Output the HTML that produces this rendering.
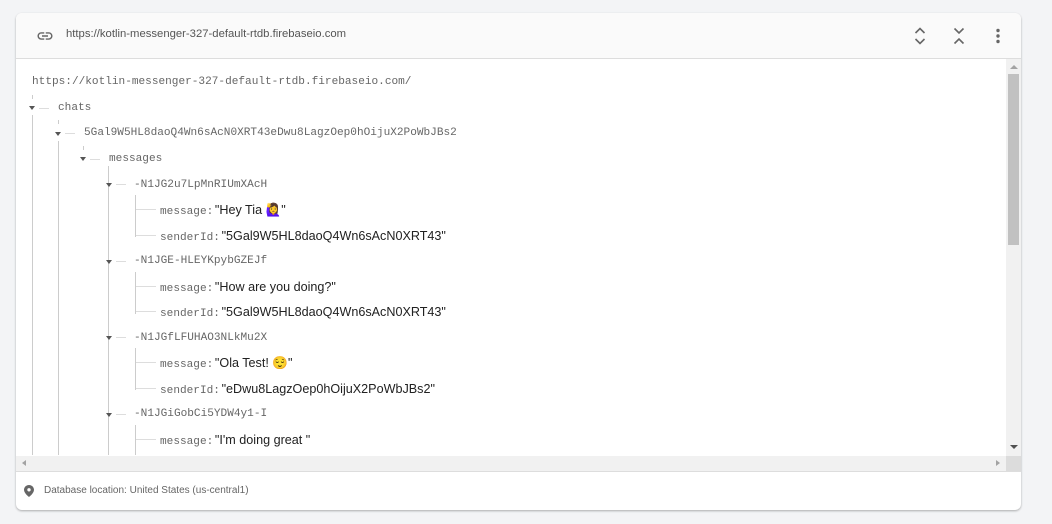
<!DOCTYPE html>
<html><head><style>
body{margin:0;width:1052px;height:524px;background:#f3f4f6;position:relative;overflow:hidden;font-family:"Liberation Sans",sans-serif}
.card{position:absolute;left:16px;top:13px;width:1005px;height:497px;background:#fff;border-radius:6px;box-shadow:0 1px 2px rgba(0,0,0,.3);overflow:hidden}
.hdr{position:absolute;left:0;top:0;width:1005px;height:45px;background:#fafafa;border-bottom:1px solid #ddd}
.m{position:absolute;font-family:"Liberation Mono",monospace;font-size:11.1px;color:#666;white-space:nowrap;line-height:14px;margin-top:1px}
.v{font-family:"Liberation Sans","Noto Sans CJK JP",sans-serif;font-size:12.6px;color:#212121;margin-left:-5px}
.ar{position:absolute;width:0;height:0;border-left:3.5px solid transparent;border-right:3.5px solid transparent;border-top:4px solid #555}
.vl{position:absolute;width:1px;background:#ccc}
.hl{position:absolute;height:1px;background:#ddd}
</style></head><body>
<div class="card">
 <div class="hdr">
  <svg style="position:absolute;left:20px;top:14px" width="18" height="18" viewBox="0 0 24 24"><path fill="#666" d="M3.9 12c0-1.71 1.39-3.1 3.1-3.1h4V7H7c-2.76 0-5 2.24-5 5s2.24 5 5 5h4v-1.9H7c-1.71 0-3.1-1.39-3.1-3.1zM8 13h8v-2H8v2zm9-6h-4v1.9h4c1.71 0 3.1 1.39 3.1 3.1s-1.39 3.1-3.1 3.1h-4V17h4c2.76 0 5-2.24 5-5s-2.24-5-5-5z"/></svg>
  <div style="position:absolute;left:50px;top:15px;font-size:11.3px;color:#555">https://kotlin-messenger-327-default-rtdb.firebaseio.com</div>
  <svg style="position:absolute;left:898px;top:13px" width="12" height="20" viewBox="0 0 12 20"><path d="M1.5 7l4.5-4.5 4.5 4.5M1.5 13l4.5 4.5 4.5-4.5" stroke="#666" stroke-width="1.6" fill="none"/></svg>
  <svg style="position:absolute;left:937px;top:13px" width="12" height="20" viewBox="0 0 12 20"><path d="M1.5 2.5l4.5 4.5 4.5-4.5M1.5 17.5l4.5-4.5 4.5 4.5" stroke="#666" stroke-width="1.6" fill="none"/></svg>
  <svg style="position:absolute;left:979px;top:15px" width="6" height="16" viewBox="0 0 6 16"><circle cx="3" cy="2.5" r="1.7" fill="#666"/><circle cx="3" cy="8" r="1.7" fill="#666"/><circle cx="3" cy="13.5" r="1.7" fill="#666"/></svg>
 </div>
 <div style="position:absolute;left:990px;top:46px;width:15px;height:397px;background:#f1f1f1"></div>
 <div style="position:absolute;left:992px;top:61px;width:11px;height:171px;background:#c1c1c1"></div>
 <div style="position:absolute;left:994px;top:52px;width:0;height:0;border-left:4px solid transparent;border-right:4px solid transparent;border-bottom:4px solid #a3a3a3"></div>
 <div style="position:absolute;left:994px;top:432px;width:0;height:0;border-left:4px solid transparent;border-right:4px solid transparent;border-top:4px solid #505050"></div>
 <div style="position:absolute;left:0;top:443px;width:990px;height:15px;background:#f1f1f1"></div>
 <div style="position:absolute;left:990px;top:443px;width:15px;height:15px;background:#dcdcdc"></div>
 <div style="position:absolute;left:6px;top:447px;border-top:3.5px solid transparent;border-bottom:3.5px solid transparent;border-right:4px solid #a3a3a3"></div>
 <div style="position:absolute;left:980px;top:447px;border-top:3.5px solid transparent;border-bottom:3.5px solid transparent;border-left:4px solid #a3a3a3"></div>
 <div style="position:absolute;left:0;top:458px;width:1005px;height:1px;background:#ddd"></div>
 <svg style="position:absolute;left:8px;top:472px" width="10" height="12" viewBox="0 0 10 12"><path d="M5 0C2.2 0 0 2.2 0 4.8 0 8.4 5 12 5 12s5-3.6 5-7.2C10 2.2 7.8 0 5 0zm0 6.5a1.7 1.7 0 110-3.4 1.7 1.7 0 010 3.4z" fill="#666"/></svg>
 <div style="position:absolute;left:28px;top:472px;font-size:10px;color:#666">Database location: United States (us-central1)</div>
</div>
<div style="position:absolute;left:16px;top:59px;width:990px;height:396px;overflow:hidden">
<div style="position:relative;left:-16px;top:-59px;width:1052px;height:524px">
 <div class="m" style="left:32px;top:74px">https://kotlin-messenger-327-default-rtdb.firebaseio.com/</div>
 <div class="vl" style="left:32px;top:95px;height:4px"></div>
 <div class="ar" style="left:29px;top:106px"></div><div class="hl" style="left:39px;top:108px;width:10px"></div>
 <div class="m" style="left:58px;top:100px">chats</div>
 <div class="vl" style="left:32px;top:115px;height:350px"></div>
 <div class="vl" style="left:58px;top:120px;height:4px"></div>
 <div class="ar" style="left:55px;top:132px"></div><div class="hl" style="left:65px;top:133px;width:10px"></div>
 <div class="m" style="left:84px;top:125px">5Gal9W5HL8daoQ4Wn6sAcN0XRT43eDwu8LagzOep0hOijuX2PoWbJBs2</div>
 <div class="vl" style="left:58px;top:141px;height:330px"></div>
 <div class="vl" style="left:83px;top:146px;height:4px"></div>
 <div class="ar" style="left:80px;top:157px"></div><div class="hl" style="left:90px;top:159px;width:10px"></div>
 <div class="m" style="left:109px;top:151px">messages</div>
 <div class="vl" style="left:108px;top:166px;height:300px"></div>

 <div class="ar" style="left:106px;top:183px"></div><div class="hl" style="left:116px;top:184px;width:10px"></div>
 <div class="m" style="left:134px;top:177px">-N1JG2u7LpMnRIUmXAcH</div>
 <div class="vl" style="left:135px;top:195px;height:42px"></div>
 <div class="hl" style="left:136px;top:209px;width:20px"></div><div class="m" style="left:160px;top:202px">message: <span class="v">"Hey Tia 🙋‍♀️"</span></div>
 <div class="hl" style="left:136px;top:235px;width:20px"></div><div class="m" style="left:160px;top:228px">senderId: <span class="v">"5Gal9W5HL8daoQ4Wn6sAcN0XRT43"</span></div>

 <div class="ar" style="left:106px;top:260px"></div><div class="hl" style="left:116px;top:261px;width:10px"></div>
 <div class="m" style="left:134px;top:253px">-N1JGE-HLEYKpybGZEJf</div>
 <div class="vl" style="left:135px;top:272px;height:42px"></div>
 <div class="hl" style="left:136px;top:286px;width:20px"></div><div class="m" style="left:160px;top:279px">message: <span class="v">"How are you doing?"</span></div>
 <div class="hl" style="left:136px;top:311px;width:20px"></div><div class="m" style="left:160px;top:304px">senderId: <span class="v">"5Gal9W5HL8daoQ4Wn6sAcN0XRT43"</span></div>

 <div class="ar" style="left:106px;top:336px"></div><div class="hl" style="left:116px;top:337px;width:10px"></div>
 <div class="m" style="left:134px;top:330px">-N1JGfLFUHAO3NLkMu2X</div>
 <div class="vl" style="left:135px;top:348px;height:42px"></div>
 <div class="hl" style="left:136px;top:362px;width:20px"></div><div class="m" style="left:160px;top:355px">message: <span class="v">"Ola Test! 😌"</span></div>
 <div class="hl" style="left:136px;top:388px;width:20px"></div><div class="m" style="left:160px;top:381px">senderId: <span class="v">"eDwu8LagzOep0hOijuX2PoWbJBs2"</span></div>

 <div class="ar" style="left:106px;top:413px"></div><div class="hl" style="left:116px;top:414px;width:10px"></div>
 <div class="m" style="left:134px;top:406px">-N1JGiGobCi5YDW4y1-I</div>
 <div class="vl" style="left:135px;top:425px;height:40px"></div>
 <div class="hl" style="left:136px;top:439px;width:20px"></div><div class="m" style="left:160px;top:432px">message: <span class="v">"I'm doing great "</span></div>
</div></div>
</body></html>
